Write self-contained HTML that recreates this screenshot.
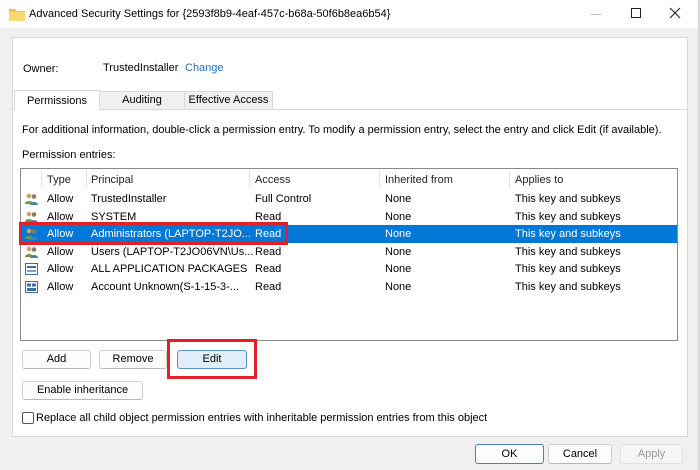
<!DOCTYPE html>
<html><head><meta charset="utf-8"><style>
*{box-sizing:border-box;margin:0;padding:0}
body{width:700px;height:470px;background:#f0f0f0;font-family:"Liberation Sans",sans-serif;font-size:11px;color:#000;position:relative;overflow:hidden}
.a{position:absolute;white-space:nowrap}
.btn{position:absolute;background:#fdfdfd;border:1px solid #d0d0d0;border-radius:3px;text-align:center;line-height:17px;border-bottom-color:#b8b8b8}
.hd{position:absolute;top:171px;height:18px;line-height:18px;color:#222}
.sep{position:absolute;top:170px;width:1px;height:18px;background:#e5e5e5}
.row{position:absolute;left:21px;width:656px;height:17.5px;line-height:18.5px}
.row span{position:absolute}
.ic{position:absolute;left:4px;top:3px;width:13px;height:12px}
</style></head><body>
<div class="a" style="left:0;top:0;width:698px;height:28px;background:#fff"></div>
<div class="a" style="left:698px;top:0;width:2px;height:470px;background:#d8d8d8"></div>
<svg class="a" style="left:9px;top:8px" width="16" height="13"><path d="M0 1h6l2 2h8v10H0z" fill="#f2c14e"/><path d="M0 4h16v9H0z" fill="#f8d775"/></svg>
<div class="a" style="left:29px;top:8px;font-size:11px">Advanced Security Settings for {2593f8b9-4eaf-457c-b68a-50f6b8ea6b54}</div>
<div class="a" style="left:591px;top:14px;width:10px;height:1px;background:#bbb"></div>
<div class="a" style="left:631px;top:8px;width:10px;height:10px;border:1px solid #222"></div>
<svg class="a" style="left:669px;top:7px" width="12" height="12"><path d="M1 1L11 11M11 1L1 11" stroke="#222" stroke-width="1.1"/></svg>

<div class="a" style="left:12px;top:37px;width:676px;height:400px;background:#fff;border:1px solid #d9d9d9"></div>
<div class="a" style="left:23px;top:63px">Owner:</div>
<div class="a" style="left:103px;top:62px">TrustedInstaller</div>
<div class="a" style="left:185px;top:62px;color:#2a6ebd">Change</div>
<div class="a" style="left:13px;top:109px;width:675px;height:1px;background:#d9d9d9"></div>
<div class="a" style="left:99px;top:91px;width:86px;height:18px;background:#f0f0f0;border:1px solid #d9d9d9;border-bottom:none;text-align:center;line-height:17px">Auditing</div>
<div class="a" style="left:184px;top:91px;width:89px;height:18px;background:#f0f0f0;border:1px solid #d9d9d9;border-bottom:none;text-align:center;line-height:17px">Effective Access</div>
<div class="a" style="left:14px;top:90px;width:86px;height:20px;background:#fff;border:1px solid #d9d9d9;border-bottom:none;text-align:center;line-height:20px">Permissions</div>

<div class="a" style="left:22px;top:124px">For additional information, double-click a permission entry. To modify a permission entry, select the entry and click Edit (if available).</div>
<div class="a" style="left:22px;top:149px">Permission entries:</div>

<div class="a" style="left:20px;top:168px;width:658px;height:173px;border:1px solid #8a8a8a;background:#fff"></div>
<div class="sep" style="left:41px"></div><div class="sep" style="left:86px"></div><div class="sep" style="left:249px"></div><div class="sep" style="left:379px"></div><div class="sep" style="left:509px"></div>
<div class="hd" style="left:47px">Type</div><div class="hd" style="left:91px">Principal</div><div class="hd" style="left:255px">Access</div><div class="hd" style="left:385px">Inherited from</div><div class="hd" style="left:515px">Applies to</div>

<div class="row" style="top:190px"><svg class="ic" viewBox="0 0 13 12"><circle cx="4" cy="3" r="2.3" fill="#c9a36a"/><path d="M0 11c0-4 8-4 8 0z" fill="#6a9a4a"/><circle cx="9" cy="3.5" r="2.3" fill="#8a7a60"/><path d="M5 12c0-4 8-4 8 0z" fill="#4f7fa8"/></svg><span style="left:26px">Allow</span><span style="left:70px">TrustedInstaller</span><span style="left:234px">Full Control</span><span style="left:364px">None</span><span style="left:494px">This key and subkeys</span></div>
<div class="row" style="top:207.5px"><svg class="ic" viewBox="0 0 13 12"><circle cx="4" cy="3" r="2.3" fill="#c9a36a"/><path d="M0 11c0-4 8-4 8 0z" fill="#6a9a4a"/><circle cx="9" cy="3.5" r="2.3" fill="#8a7a60"/><path d="M5 12c0-4 8-4 8 0z" fill="#4f7fa8"/></svg><span style="left:26px">Allow</span><span style="left:70px">SYSTEM</span><span style="left:234px">Read</span><span style="left:364px">None</span><span style="left:494px">This key and subkeys</span></div>
<div class="row" style="top:225px;background:#0078d7;color:#fff"><svg class="ic" viewBox="0 0 13 12"><circle cx="4" cy="3" r="2.3" fill="#c9a36a"/><path d="M0 11c0-4 8-4 8 0z" fill="#6a9a4a"/><circle cx="9" cy="3.5" r="2.3" fill="#8a7a60"/><path d="M5 12c0-4 8-4 8 0z" fill="#4f7fa8"/></svg><span style="left:26px">Allow</span><span style="left:70px">Administrators (LAPTOP-T2JO...</span><span style="left:234px">Read</span><span style="left:364px">None</span><span style="left:494px">This key and subkeys</span></div>
<div class="row" style="top:242.5px"><svg class="ic" viewBox="0 0 13 12"><circle cx="4" cy="3" r="2.3" fill="#c9a36a"/><path d="M0 11c0-4 8-4 8 0z" fill="#6a9a4a"/><circle cx="9" cy="3.5" r="2.3" fill="#8a7a60"/><path d="M5 12c0-4 8-4 8 0z" fill="#4f7fa8"/></svg><span style="left:26px">Allow</span><span style="left:70px">Users (LAPTOP-T2JO06VN\Us...</span><span style="left:234px">Read</span><span style="left:364px">None</span><span style="left:494px">This key and subkeys</span></div>
<div class="row" style="top:260px"><svg class="ic" viewBox="0 0 13 12"><rect x=".5" y=".5" width="12" height="11" fill="#fff" stroke="#3a6ea5"/><rect x="2" y="3" width="9" height="2" fill="#3a6ea5"/><rect x="2" y="7" width="9" height="2" fill="#7aa0c8"/></svg><span style="left:26px">Allow</span><span style="left:70px">ALL APPLICATION PACKAGES</span><span style="left:234px">Read</span><span style="left:364px">None</span><span style="left:494px">This key and subkeys</span></div>
<div class="row" style="top:277.5px"><svg class="ic" viewBox="0 0 13 12"><rect x=".5" y=".5" width="12" height="11" fill="#fff" stroke="#3a6ea5"/><rect x="2" y="2.5" width="4" height="3" fill="#3a6ea5"/><rect x="7" y="2.5" width="4" height="3" fill="#3a6ea5"/><rect x="2" y="7" width="9" height="3" fill="#3a6ea5"/></svg><span style="left:26px">Allow</span><span style="left:70px">Account Unknown(S-1-15-3-...</span><span style="left:234px">Read</span><span style="left:364px">None</span><span style="left:494px">This key and subkeys</span></div>

<div class="a" style="left:19px;top:222px;width:269px;height:23px;border:3px solid #e0202a"></div>

<div class="btn" style="left:22px;top:350px;width:69px;height:19px">Add</div>
<div class="btn" style="left:99px;top:350px;width:68px;height:19px">Remove</div>
<div class="btn" style="left:177px;top:350px;width:70px;height:19px;background:#e0eef9;border-color:#5a8fc4">Edit</div>
<div class="a" style="left:167px;top:339px;width:90px;height:40px;border:3px solid #e0202a"></div>
<div class="btn" style="left:22px;top:381px;width:121px;height:19px">Enable inheritance</div>
<div class="a" style="left:22px;top:412px;width:12px;height:12px;border:1px solid #555;border-radius:2px;background:#fff"></div>
<div class="a" style="left:36px;top:412px">Replace all child object permission entries with inheritable permission entries from this object</div>

<div class="btn" style="left:475px;top:444px;width:69px;height:20px;border:1px solid #4a7fb8;line-height:18px">OK</div>
<div class="btn" style="left:548px;top:444px;width:64px;height:20px;line-height:18px">Cancel</div>
<div class="btn" style="left:620px;top:444px;width:63px;height:20px;line-height:18px;color:#9a9a9a;background:#f5f5f5;border-color:#e0e0e0">Apply</div>
</body></html>
